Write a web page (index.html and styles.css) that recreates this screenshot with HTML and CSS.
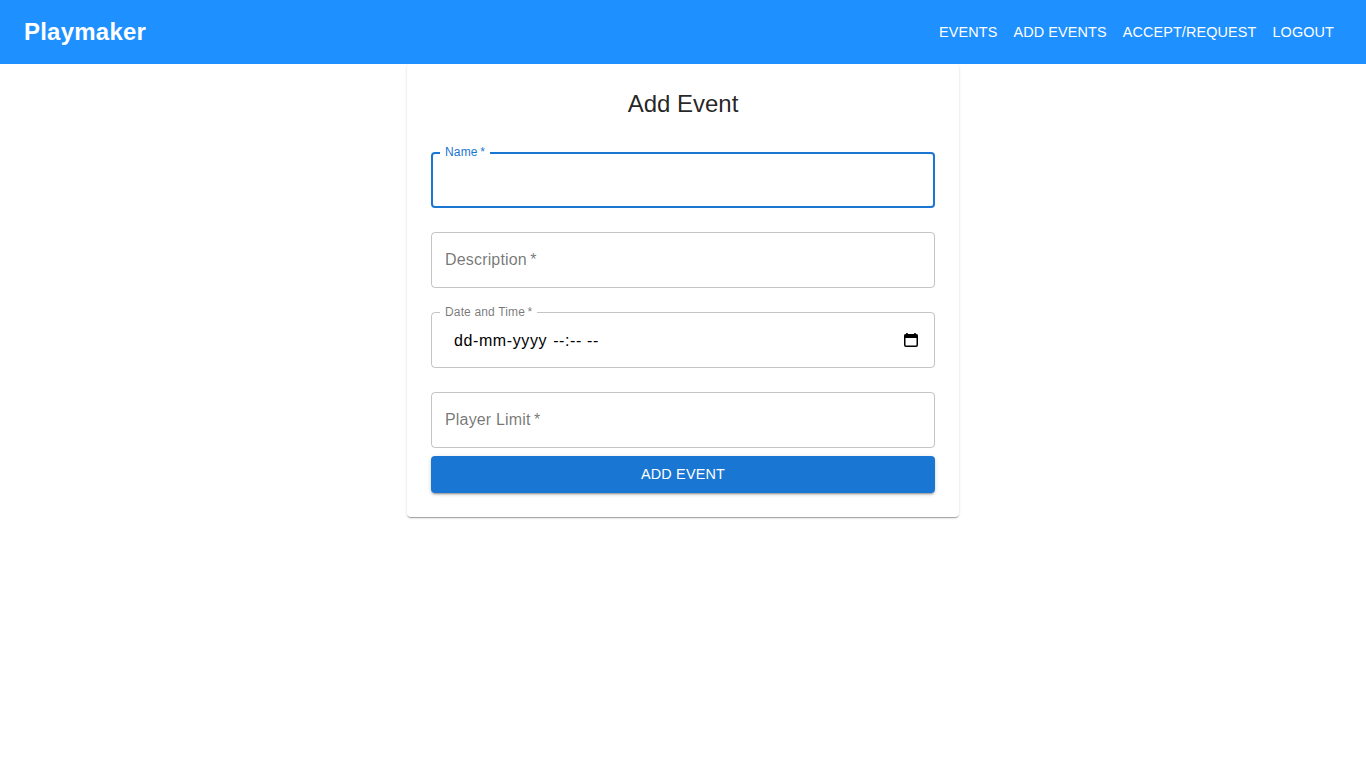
FILE: index.html
```html
<!DOCTYPE html>
<html lang="en">
<head>
<meta charset="utf-8">
<title>Playmaker</title>
<link rel="stylesheet" href="styles.css">
</head>
<body>
<header class="appbar">
  <div class="brand">Playmaker</div>
  <nav class="nav">
    <a class="nav-link">EVENTS</a>
    <a class="nav-link">ADD EVENTS</a>
    <a class="nav-link">ACCEPT/REQUEST</a>
    <a class="nav-link">LOGOUT</a>
  </nav>
</header>
<main class="page">
  <form class="card">
    <h1 class="title">Add Event</h1>
    <div class="field focused">
      <label class="label shrunk">Name&thinsp;*</label>
      <fieldset class="outline"><legend class="notch">Name&thinsp;*</legend></fieldset>
    </div>
    <div class="field">
      <label class="label">Description&thinsp;*</label>
      <fieldset class="outline"><legend class="notch empty"></legend></fieldset>
    </div>
    <div class="field">
      <label class="label shrunk">Date and Time&thinsp;*</label>
      <div class="date-row">
        <span class="date-text">dd-mm-yyyy <span class="date-time">--:-- --</span></span>
        <svg class="cal" width="20" height="20" viewBox="0 0 20 20"><path d="M6 3v2M14 3v2" stroke="#000" stroke-width="1.6"/><rect x="3.75" y="4.75" width="12.5" height="11.5" rx="1.2" fill="none" stroke="#000" stroke-width="1.5"/><rect x="3.5" y="4.5" width="13" height="3.5" fill="#000"/></svg>
      </div>
      <fieldset class="outline"><legend class="notch">Date and Time&thinsp;*</legend></fieldset>
    </div>
    <div class="field">
      <label class="label">Player Limit&thinsp;*</label>
      <fieldset class="outline"><legend class="notch empty"></legend></fieldset>
    </div>
    <button class="submit" type="button">ADD EVENT</button>
  </form>
</main>
</body>
</html>
```
FILE: styles.css
```css
* { box-sizing: border-box; }
html, body { margin: 0; padding: 0; background: #fff; }
body { font-family: "Liberation Sans", Arial, sans-serif; color: rgba(0,0,0,.87); min-height: 768px; }

.appbar {
  height: 64px;
  background: #1e90ff;
  color: #fff;
  display: flex;
  align-items: center;
  justify-content: space-between;
  padding: 0 24px;
  position: relative;
  z-index: 2;
}
.brand { font-size: 24px; font-weight: 700; line-height: 32px; letter-spacing: .22px; }
.nav { display: flex; gap: 0; }
.nav-link {
  font-size: 14.4px;
  letter-spacing: .13px;
  line-height: 24px;
  padding: 4px 8px;
  color: #fff;
}

.page { display: flex; justify-content: center; }
.card {
  width: 552px;
  height: 453px;
  background: #fff;
  border-radius: 4px;
  padding: 24px;
  box-shadow: 0 2px 1px -1px rgba(0,0,0,.2), 0 1px 1px 0 rgba(0,0,0,.14), 0 1px 3px 0 rgba(0,0,0,.12);
  display: flex;
  flex-direction: column;
}
.title {
  margin: 0 0 16px;
  font-size: 24px;
  font-weight: 400;
  line-height: 32px;
  text-align: center;
}

.field { position: relative; height: 56px; margin: 16px 0 8px; }
.outline {
  position: absolute;
  inset: -5px 0 0 0;
  margin: 0;
  padding: 0 8px;
  border: 1px solid rgba(0,0,0,.23);
  border-radius: 4px;
  pointer-events: none;
}
.notch {
  font-size: 12px;
  letter-spacing: .15px;
  line-height: 11px;
  height: 11px;
  padding: 0 5px;
  visibility: hidden;
  white-space: nowrap;
}
.notch.empty { padding: 0; }
.label {
  position: absolute;
  left: 14px;
  top: 16px;
  font-size: 16px;
  letter-spacing: .17px;
  line-height: 23px;
  color: rgba(0,0,0,.55);
}
.label.shrunk {
  top: -7px;
  font-size: 12px;
  letter-spacing: .15px;
  line-height: 15px;
}
.focused .outline { border: 2px solid #1976d2; padding: 0 7px; }
.focused .label { color: #1976d2; }

.date-row {
  height: 56px;
  display: flex;
  align-items: center;
  justify-content: space-between;
  padding: 0 14px 0 23px;
}
.date-text { font-size: 16px; color: #000; letter-spacing: .6px; white-space: pre; margin-top: 2px; }
.date-time { margin-left: 1px; }
.cal { display: block; }

.submit {
  height: 37px;
  border: 0;
  border-radius: 4px;
  background: #1976d2;
  color: #fff;
  padding: 0 0 2px;
  font: 500 14.4px/24px "Liberation Sans", Arial, sans-serif;
  letter-spacing: .2px;
  box-shadow: 0 3px 1px -2px rgba(0,0,0,.2), 0 2px 2px 0 rgba(0,0,0,.14), 0 1px 5px 0 rgba(0,0,0,.12);
}
```
